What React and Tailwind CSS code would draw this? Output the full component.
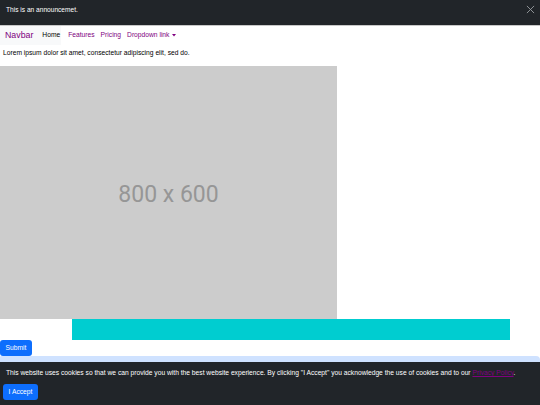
export default function App() {
  return (
    <div className="w-[540px] h-[405px] overflow-hidden bg-white text-[6.7px] text-black" style={{ fontFamily: '"Liberation Sans", Arial, sans-serif' }}>
      <div className="h-[26px] bg-[#212529] border-b border-[#c8c8c8] flex items-start justify-between pl-[6px] pr-[5px] pt-[5px]">
        <span className="text-white text-[6.6px] leading-[9px]">This is an announcemet.</span>
        <svg width="9" height="9" viewBox="0 0 10 10" className="text-[#9a9ea2]">
          <path d="M1 1L9 9M9 1L1 9" stroke="currentColor" strokeWidth="1" fill="none" />
        </svg>
      </div>
      <nav className="h-[19px] flex items-center">
        <div className="h-full bg-[#f8f9fa] flex items-center pl-[5px] pr-[1px]">
          <span className="text-[#800080] text-[8.8px] mr-[9px]">Navbar</span>
          <span className="text-black">Home</span>
        </div>
        <span className="text-[#800080] ml-[7px]">Features</span>
        <span className="text-[#800080] ml-[6px]">Pricing</span>
        <span className="text-[#800080] ml-[6px] flex items-center">
          Dropdown link
          <svg width="4" height="2.5" viewBox="0 0 4 2.5" className="ml-[3px]">
            <path d="M0 0H4L2 2.5Z" fill="#800080" />
          </svg>
        </span>
      </nav>
      <p className="pl-[3px] h-[21px] pt-[3px]">Lorem ipsum dolor sit amet, consectetur adipiscing elit, sed do.</p>
      <div className="w-[337px] h-[253px] bg-[#cccccc] flex items-center justify-center pt-[6px]">
        <span className="text-[#969696] text-[23px]" style={{ fontFamily: 'Roboto, "Liberation Sans", sans-serif' }}>800 x 600</span>
      </div>
      <div className="ml-[72px] w-[438px] h-[21px] bg-[#00cdd0]" />
      <button className="h-[16px] w-[32px] bg-[#0d6efd] rounded-[3px] text-white text-[6.7px] flex items-center justify-center">Submit</button>
      <div className="h-[6px] bg-[#cfe2ff] rounded-tr-[4px] rounded-tl-[1px]" />
      <div className="h-[43px] bg-[#212529] pl-[6px] pt-[6px]">
        <p className="text-white text-[6.7px] leading-[9px]">
          This website uses cookies so that we can provide you with the best website experience. By clicking "I Accept" you acknowledge the use of cookies and to our <a className="text-[#800080] underline">Privacy Policy</a>.
        </p>
        <button className="mt-[7px] -ml-[3px] h-[16px] w-[35px] bg-[#0d6efd] rounded-[3px] text-white text-[6.7px] flex items-center justify-center">I Accept</button>
      </div>
    </div>
  );
}
